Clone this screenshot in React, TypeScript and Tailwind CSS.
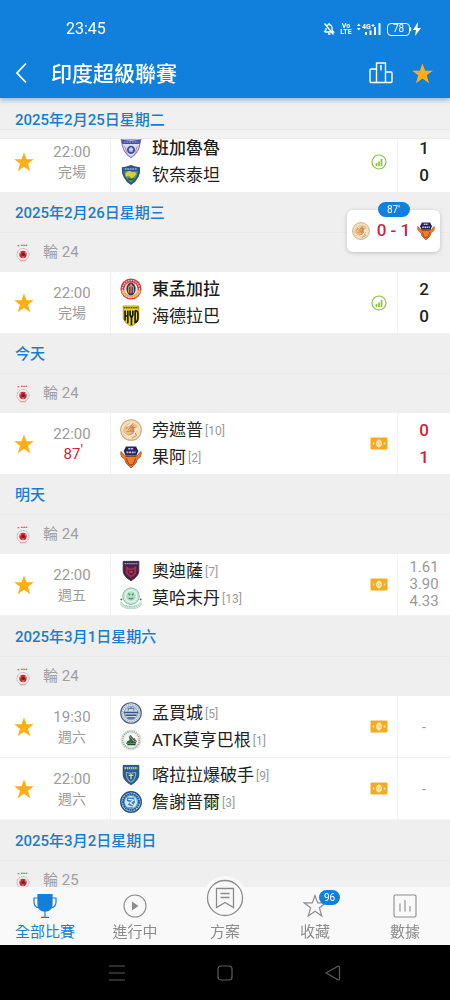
import type { ReactNode } from "react";

type CrestName =
  | "bengaluru" | "chennaiyin" | "eastBengal" | "hyderabad" | "punjab" | "goa"
  | "odisha" | "mohammedan" | "mumbai" | "mohunBagan" | "kerala" | "jamshedpur";

type Team = { name: string; crest: CrestName; rank?: number; winner?: boolean };
type Match = {
  time: string;
  status: string;
  state: "finished" | "live" | "upcoming";
  home: Team;
  away: Team;
  result: string[];
};
type Day = { title: string; round: string; matches: Match[] };

const firstMatch: Match = {
  time: "22:00", status: "完場", state: "finished", result: ["1", "0"],
  home: { name: "班加魯魯", crest: "bengaluru", winner: true },
  away: { name: "钦奈泰坦", crest: "chennaiyin" },
};

const days: Day[] = [
  {
    title: "2025年2月26日星期三", round: "輪 24",
    matches: [{
      time: "22:00", status: "完場", state: "finished", result: ["2", "0"],
      home: { name: "東孟加拉", crest: "eastBengal", winner: true },
      away: { name: "海德拉巴", crest: "hyderabad" },
    }],
  },
  {
    title: "今天", round: "輪 24",
    matches: [{
      time: "22:00", status: "87", state: "live", result: ["0", "1"],
      home: { name: "旁遮普", crest: "punjab", rank: 10 },
      away: { name: "果阿", crest: "goa", rank: 2 },
    }],
  },
  {
    title: "明天", round: "輪 24",
    matches: [{
      time: "22:00", status: "週五", state: "upcoming", result: ["1.61", "3.90", "4.33"],
      home: { name: "奧迪薩", crest: "odisha", rank: 7 },
      away: { name: "莫哈末丹", crest: "mohammedan", rank: 13 },
    }],
  },
  {
    title: "2025年3月1日星期六", round: "輪 24",
    matches: [
      {
        time: "19:30", status: "週六", state: "upcoming", result: ["-"],
        home: { name: "孟買城", crest: "mumbai", rank: 5 },
        away: { name: "ATK莫亨巴根", crest: "mohunBagan", rank: 1 },
      },
      {
        time: "22:00", status: "週六", state: "upcoming", result: ["-"],
        home: { name: "喀拉拉爆破手", crest: "kerala", rank: 9 },
        away: { name: "詹謝普爾", crest: "jamshedpur", rank: 3 },
      },
    ],
  },
  { title: "2025年3月2日星期日", round: "輪 25", matches: [] },
];

const SHIELD = "M3.5 1.5h17v10c0 5-4 8.500-8.500 11-4.500-2.500-8.500-6-8.500-11z";

const crests: Record<CrestName, ReactNode> = {
  bengaluru: (
    <>
      <path d="M1 1q11 3 22 0l-2 10q-2 7-9 11.500Q5 18 3 11z" fill="#d9dcef" stroke="#7a80c0" strokeWidth="1.200" />
      <path d="M1.500 2.500q10.500 3 21 0l-1 5h-19z" fill="#4650a6" />
      <path d="M4 5.500h16" stroke="#aeb4e4" strokeWidth="1" strokeDasharray="2 1" />
      <circle cx="12" cy="14" r="4.500" fill="#4451aa" />
      <path d="m12 11 2.500 2-1 3h-3l-1-3z" fill="#c9cdea" />
      <path d="M5 10l3 8M19 10l-3 8" stroke="#c97a86" strokeWidth="1" />
    </>
  ),
  chennaiyin: (
    <>
      <path d="M12 1q5 2 10 2.500Q23 16 12 23 1 16 2 3.500 7 3 12 1z" fill="#2a5784" />
      <path d="M4.500 8h15q-1 8-7.500 12.500Q5.500 16 4.500 8z" fill="#5f9a4a" />
      <path d="M6 10q4-4 7-1 4-1 5 2l-2 2-3 3-3-3-4 1z" fill="#d8cf3b" />
      <path d="M5 5.500h14" stroke="#9fb6ca" strokeWidth="1.500" strokeDasharray="2 .8" />
      <path d="M9 16q3 2 6 0" stroke="#234d55" strokeWidth="1.500" fill="none" />
    </>
  ),
  eastBengal: (
    <>
      <circle cx="12" cy="12" r="11.500" fill="#cf3a3f" />
      <path d="M1 14a11.500 11.500 0 0 0 22 0l-4-1a8 8 0 0 1-14 0z" fill="#e9a431" />
      <circle cx="12" cy="12" r="9.300" fill="none" stroke="#f7d6cf" strokeWidth="1.400" strokeDasharray="1.500 1.200" />
      <circle cx="12" cy="12" r="7.300" fill="#efe3e5" />
      <ellipse cx="12" cy="12" rx="5" ry="7" fill="#353064" />
      <path d="M9.500 16V10l2.500-3 2.500 3v6M12 8v9" stroke="#e09a54" strokeWidth="1.300" fill="none" />
    </>
  ),
  hyderabad: (
    <>
      <path d="M3.500 1h17v13.500q-2 6-8.500 8.500-6.500-2.500-8.500-8.500z" fill="#f0dc2b" stroke="#8d8226" strokeWidth=".8" />
      <path d="M4 3h16" stroke="#5b5420" strokeWidth="1.400" strokeDasharray="2 .5" />
      <path d="M5.500 6v11M8.500 6v14M5.500 12h3M11 6v5l1.500 3L14 11V6M12.500 14v8M16.500 6v13q3-1 3-4V9q0-3-3-3" stroke="#1f1d10" strokeWidth="1.900" fill="none" />
    </>
  ),
  punjab: (
    <>
      <circle cx="12" cy="12" r="11.300" fill="#f2dfc2" stroke="#d0a873" strokeWidth="1.100" />
      <path d="M3 13q2-8 9-9 6 0 8 5l-4-1-1 6 3 2q-5 6-12 2z" fill="#ecc08a" />
      <path d="M4 17q5 2 10-1l-2-3-5 1M6 11l6-7M9 12l5-7M14 7v7h4M12 9h6M16 14l2 4-5 3" stroke="#c08a52" strokeWidth="1" fill="none" />
      <path d="M4 16l6 3 5-2 4-7M8 8l5-4" stroke="#fff5e5" strokeWidth="1.300" fill="none" />
      <path d="M11 9h4v4h-4M11 11h3" stroke="#d8743f" strokeWidth="1" fill="none" />
    </>
  ),
  goa: (
    <>
      <path d="M1 6q-1 6 4 8l1.500 4.500L12 24l5.500-5.500L19 14q5-2 4-8l-4 4H5z" fill="#ef7e2c" stroke="#8d4316" strokeWidth=".8" />
      <path d="M6.500.500h11l2.500 5-2 4.500H6L4 5.500z" fill="#24245f" />
      <path d="M9 3h6M7 7h10" stroke="#c4c7e4" strokeWidth="1.800" strokeDasharray="2.200 .7" />
      <path d="M6 11.500h12M7 13.500l2.500 6.500M17 13.500 14.500 20" stroke="#8f4117" strokeWidth="1.100" />
      <path d="M10 20.500h4" stroke="#8f3f14" strokeWidth="1.200" fill="none" />
    </>
  ),
  odisha: (
    <>
      <path d={SHIELD} fill="#3d2550" stroke="#33224a" strokeWidth="1" />
      <path d="M5 7h14v5q-1 5-7 9-6-4-7-9z" fill="#65203f" />
      <path d="M5 4h14" stroke="#a8a2bd" strokeWidth="1.500" strokeDasharray="1.500 .6" />
      <path d="M7.500 8l2 2h5l2-2v7L12 18l-4.500-3z" fill="none" stroke="#b03350" strokeWidth="1.400" />
      <path d="M10 13h4" stroke="#d24a62" strokeWidth="1.300" />
    </>
  ),
  mohammedan: (
    <>
      <circle cx="12" cy="10" r="9" fill="#c9eadb" stroke="#7fb29b" strokeWidth="1" />
      <circle cx="12" cy="10" r="6" fill="#b2dcc9" stroke="#e6f7ef" strokeWidth="1.200" />
      <path d="M9 7l2 2M15 7l-2 2M9.500 12q2.500 2 5 0" stroke="#4a8a6e" strokeWidth="1.200" fill="none" />
      <path d="M1 16q3 5 11 5t11-5v4q-4 4-11 4T1 20z" fill="#d9f0e5" stroke="#a3cbb8" strokeWidth=".8" />
      <path d="M4 20q8 4 16 0" stroke="#7bab94" strokeWidth="1" strokeDasharray="1 1" fill="none" />
      <circle cx="1.500" cy="13.500" r="1" fill="#39634f" />
      <circle cx="22.500" cy="13.500" r="1" fill="#39634f" />
    </>
  ),
  mumbai: (
    <>
      <circle cx="12" cy="12" r="11.200" fill="#e1e8ef" stroke="#4b6280" strokeWidth="1.300" />
      <circle cx="12" cy="12" r="9.300" fill="none" stroke="#9badc2" strokeWidth="1.300" strokeDasharray="1.500 1" />
      <circle cx="12" cy="12" r="7.500" fill="#c9d8e7" stroke="#6c84a0" strokeWidth=".8" />
      <path d="M4 11.500h16M6 14.500h12M8 17.500h8" stroke="#38577c" strokeWidth="1.500" fill="none" />
      <path d="M9 9.500V7h6v2.500M12 7V5" stroke="#5f7da0" strokeWidth="1.200" fill="none" />
    </>
  ),
  mohunBagan: (
    <>
      <circle cx="12" cy="12" r="11" fill="#edf2ed" stroke="#d3dad4" strokeWidth=".8" />
      <circle cx="12" cy="12" r="9.200" fill="none" stroke="#98a59b" strokeWidth="2" strokeDasharray="1.200 1.100" />
      <circle cx="12" cy="12" r="6.800" fill="#f6f9f4" />
      <path d="M6.500 16q1-3 4-4l-1-5 3 3 2 3 3 1v2z" fill="#2f6848" />
      <path d="M11 7l5 6M8 17h9" stroke="#33453b" strokeWidth="1.200" />
      <path d="M15 10l3 4" stroke="#a44c4a" strokeWidth="1.200" />
    </>
  ),
  kerala: (
    <>
      <path d={SHIELD} fill="#2a5a97" stroke="#1f4470" strokeWidth="1" />
      <path d="M5 4.500h14" stroke="#c7d64d" strokeWidth="2.200" strokeDasharray="1.600 .7" />
      <path d="M7 9q5 2 10 0M7 9q-1 7 5 11M17 9q1 7-5 11" stroke="#86b3b0" strokeWidth="1.200" fill="none" />
      <path d="M9.500 12.500h5M12 10.500v6" stroke="#dce66d" strokeWidth="1.400" />
    </>
  ),
  jamshedpur: (
    <>
      <circle cx="12" cy="12" r="11.200" fill="#dbe9f4" stroke="#1f4f88" strokeWidth="1.500" />
      <circle cx="12" cy="12" r="8.700" fill="#75afd8" stroke="#235d9d" strokeWidth="2.400" strokeDasharray="2 .6" />
      <circle cx="12" cy="12" r="6.500" fill="#d5eaf6" />
      <path d="M7.500 7h8l1 5-3 5-5-2 2-3-3-1z" fill="#3888c6" />
      <path d="M9 9l6 1-4 3 3 2" stroke="#f3faff" strokeWidth="1.200" fill="none" />
      <path d="M9 18h5" stroke="#d37c53" strokeWidth="1.200" />
    </>
  ),
};

function Crest({ name, className = "size-[22px]" }: { name: CrestName; className?: string }) {
  return <svg viewBox="0 0 24 24" className={`${className} shrink-0`} aria-hidden="true">{crests[name]}</svg>;
}

function Star({ className }: { className: string }) {
  return (
    <svg viewBox="0 0 24 24" className={className} fill="#ffae15" aria-hidden="true">
      <path d="M12 .500l3 8.300h8.800l-7 5.200 2.700 9L12 17.700 4.500 23l2.700-9-7-5.200H9z" />
    </svg>
  );
}

function LeagueLogo() {
  return (
    <svg viewBox="0 0 16 18" className="h-[18px] w-4" aria-hidden="true">
      <path d="M2.500 1.800h2M6 1.300h6.500" stroke="#dc4048" strokeWidth="1.100" strokeDasharray="1.800 .4" />
      <circle cx="8" cy="10.500" r="6" fill="#f7efee" stroke="#bdb5b7" strokeWidth="1" strokeDasharray="2 .5" />
      <circle cx="8" cy="10.500" r="3.700" fill="#cf2a35" />
      <path d="m6.500 9.500 2-1 1.500 1.500-.5 2H7z" fill="#7c2028" />
      <path d="M4.500 8.500l1.500.5M11.500 8.500 10 9M8 13.800V12.500" stroke="#f4d5d5" strokeWidth=".9" />
      <path d="M5 16.800h6" stroke="#dc9c9f" strokeWidth="1" />
    </svg>
  );
}

function StatsMark() {
  return (
    <svg viewBox="0 0 16 16" className="size-4" fill="none" stroke="#8bc53f" aria-label="數據">
      <circle cx="8" cy="8" r="7" strokeWidth="1.200" />
      <path d="M5.500 9V12M8 7.500V12M10.500 5V12" strokeWidth="1.700" />
    </svg>
  );
}

function OddsMark() {
  return (
    <svg viewBox="0 0 18 13" className="h-[13px] w-[18px]" fill="none" aria-label="賠率">
      <rect x=".5" y=".5" width="17" height="12" rx="1" fill="#f5ab21" />
      <ellipse cx="9" cy="6.500" rx="2.200" ry="2.800" stroke="#fff1cc" strokeWidth="1.300" />
      <path d="M9 2.500v8M3.500 5.500v2M14.500 5.500v2" stroke="#fff1cc" strokeWidth="1.300" />
    </svg>
  );
}

function TeamLine({ team }: { team: Team }) {
  return (
    <div className="flex h-[27px] items-center whitespace-nowrap">
      <Crest name={team.crest} />
      <span className={team.winner ? "ml-2.5 pt-0.5 text-[17px] font-medium text-[#1c1c1c]" : "ml-2.5 pt-0.5 text-[17px] text-[#222]"}>
        {team.name}
      </span>
      {team.rank !== undefined && <span className="ml-0.5 pt-0.5 text-xs text-[#9a9a9a]">[{team.rank}]</span>}
    </div>
  );
}

function Result({ match }: { match: Match }) {
  const lines = match.result;
  const style =
    lines.length === 3
      ? "text-[15px] leading-[17px] text-[#999]"
      : lines.length === 1
        ? "text-sm text-[#999]"
        : match.state === "live"
          ? "text-[17px] leading-[27px] font-medium text-[#d0223b]"
          : "text-[17px] leading-[27px] font-medium text-[#222]";
  return (
    <div className={`flex w-[53px] flex-col items-center justify-center border-l border-[#f4f4f4] ${style}`}>
      {lines.map((line, i) => <span key={i}>{line}</span>)}
    </div>
  );
}

function MatchRow({ match }: { match: Match }) {
  return (
    <article
      className={
        match.state === "upcoming"
          ? "flex h-[62px] items-stretch border-b border-[#f2f2f2] bg-white"
          : "flex h-[61px] items-stretch bg-white"
      }
    >
      <button type="button" aria-label="收藏比賽" className="flex w-12 items-center justify-center">
        <Star className="size-5" />
      </button>
      <div className="flex w-12 flex-col items-center justify-center text-[#9b9b9b]">
        <span className="text-[15px] leading-5">{match.time}</span>
        {match.state === "live" ? (
          <span className="relative text-[15px] leading-5 text-[#c9283c]">
            {match.status}
            <span className="absolute -top-1 left-full">'</span>
          </span>
        ) : (
          <span className="text-sm leading-5">{match.status}</span>
        )}
      </div>
      <div className="ml-3.5 flex min-w-0 flex-1 flex-col justify-center border-l border-[#f0f0f0] pl-[9px]">
        <TeamLine team={match.home} />
        <TeamLine team={match.away} />
      </div>
      <div className="flex w-9 items-center justify-center">
        {match.state === "finished" ? <StatsMark /> : <OddsMark />}
      </div>
      <Result match={match} />
    </article>
  );
}

function DaySection({ day }: { day: Day }) {
  return (
    <section>
      <h2 className="flex h-[41px] items-center border-b border-[#e9e9e9] px-[15px] pt-0.5 text-[15px] font-medium text-[#1b7cc9]">
        {day.title}
      </h2>
      <div className="flex h-[39px] items-center gap-3 px-[15px] text-[15px] text-[#a0a0a0]">
        <LeagueLogo />
        <span>{day.round}</span>
      </div>
      {day.matches.map((match) => <MatchRow key={match.home.name} match={match} />)}
    </section>
  );
}

function StatusBar() {
  return (
    <div className="flex h-12 items-center justify-between pt-[10px] pr-7 pl-[66px]">
      <span className="text-base">23:45</span>
      <div className="flex items-center">
        <svg viewBox="0 0 12 14" className="h-[14px] w-3" fill="none" stroke="white" strokeWidth="1.300" aria-hidden="true">
          <path d="M2 10h8.500L9 8V5.500A3 3 0 0 0 4 3.500M3 6v2L1 10M5 12h2.500M1.500 1.500l9 11M6 1v1" />
        </svg>
        <span className="ml-1.5 flex w-2.5 flex-col items-center text-[7px] leading-[6px] font-bold">
          <span>Vo</span><span>LTE</span>
        </span>
        <svg viewBox="0 0 24 14" className="ml-1.5 h-[14px] w-6" fill="white" aria-hidden="true">
          <path d="M0 4l1.800-2.500L3.600 4zM0 6h3.600L1.800 8.500zM8 10h2v3H8zM12.500 8.500h2V13h-2zM17 5h2v8h-2zM21.500 1h2v12h-2z" />
          <text x="5" y="7" fontSize="7" fontWeight="700" fontFamily="Roboto, sans-serif">4G</text>
          <path d="M15.500 2h1v1h1v1h-1v1h-1V4h-1V3h1z" />
        </svg>
        <span className="ml-1.5 flex h-[13px] w-[23px] items-center justify-center rounded border border-white text-[10px] leading-none">78</span>
        <svg viewBox="0 0 12 14" className="h-[14px] w-3" fill="white" aria-hidden="true">
          <path d="M0 5h1.200v4H0zM8 0 3 8h3l-1 6 6-8H7.500z" />
        </svg>
      </div>
    </div>
  );
}

function LiveCard() {
  return (
    <aside className="absolute top-[210px] right-2.5 z-20 flex h-[42px] w-[93px] items-center justify-between rounded-md bg-white px-[5px] shadow-[0_1px_4px_rgba(0,0,0,0.2)]">
      <span className="absolute -top-2 left-1/2 flex h-[15px] w-8 -translate-x-1/2 items-center justify-center rounded-full bg-[#1080dc] text-[10px] text-white">
        87'
      </span>
      <Crest name="punjab" className="size-[18px]" />
      <span className="text-[17px] font-medium whitespace-nowrap text-[#d0223b]">0 - 1</span>
      <Crest name="goa" className="size-[18px]" />
    </aside>
  );
}

function TabLink({ label, active, children }: { label: string; active?: boolean; children: ReactNode }) {
  return (
    <a
      href="#"
      aria-current={active ? "page" : undefined}
      className={
        active
          ? "flex flex-1 flex-col items-center justify-end pb-[3px] text-[#147fd6]"
          : "flex flex-1 flex-col items-center justify-end pb-[3px] text-[#8c8c8c]"
      }
    >
      {children}
      <span className="text-[15px] leading-5 whitespace-nowrap">{label}</span>
    </a>
  );
}

function TabBar() {
  return (
    <nav className="relative z-10 flex h-[58px] shrink-0 bg-[#f9f9f9]">
      <TabLink label="全部比賽" active>
        <svg viewBox="0 0 24 24" className="mb-1 size-6" fill="none" stroke="currentColor" strokeWidth="1.200" aria-hidden="true">
          <path d="M5 .500h14v10q0 5-5 6.500h-4q-5-1.500-5-6.500z" fill="currentColor" />
          <path d="M5 4H1v4q0 5 5 6M19 4h4v4q0 5-5 6M12 17v6M8 23.300h8" />
        </svg>
      </TabLink>
      <TabLink label="進行中">
        <svg viewBox="0 0 24 24" className="mb-1 size-6" fill="none" stroke="currentColor" strokeWidth="1.100" aria-hidden="true">
          <circle cx="12" cy="12" r="11" />
          <path d="m9.500 8.500 5 3.500-5 3.500z" fill="currentColor" />
        </svg>
      </TabLink>
      <TabLink label="方案">
        <span className="mb-0.5 -mt-6 flex size-11 items-center justify-center rounded-full bg-[#f9f9f9]">
          <svg viewBox="0 0 38 38" className="size-[38px]" fill="none" stroke="currentColor" strokeWidth="1.300" aria-hidden="true">
            <circle cx="19" cy="19" r="17.500" />
            <path d="M10.500 9.500h17v19l-8.500-5-8.500 5zM14.500 14.500h9M14.500 18.500h9" />
          </svg>
        </span>
      </TabLink>
      <TabLink label="收藏">
        <span className="relative mb-1">
          <svg viewBox="0 0 24 24" className="size-6" fill="none" stroke="currentColor" strokeWidth="1.200" aria-hidden="true">
            <path d="M12 1.500l2.700 7.400h8l-6.300 4.900 2.400 8.200L12 17.300 5.200 22l2.400-8.200-6.300-4.900h8z" />
          </svg>
          <span className="absolute -top-1 left-4 flex h-[15px] w-[21px] items-center justify-center rounded-full bg-[#147fd6] text-[10px] text-white">96</span>
        </span>
      </TabLink>
      <TabLink label="數據">
        <svg viewBox="0 0 24 24" className="mb-1 size-6" fill="none" stroke="currentColor" strokeWidth="1.100" aria-hidden="true">
          <rect x="1" y="1" width="22" height="22" rx="1.500" />
          <path d="M7 9.500v8M12 6v11.500M17 12v5.500" />
        </svg>
      </TabLink>
    </nav>
  );
}

function SystemBar() {
  return (
    <div className="flex h-[55px] shrink-0 items-center justify-center gap-[90px] bg-black text-[#5c5c5c]">
      <button type="button" aria-label="選單">
        <svg viewBox="0 0 18 18" className="size-[18px]" stroke="currentColor" strokeWidth="1.200"><path d="M1 2h16M1 9h16M1 16h16" /></svg>
      </button>
      <button type="button" aria-label="主畫面">
        <svg viewBox="0 0 18 18" className="size-[18px]" fill="none" stroke="currentColor" strokeWidth="1.200"><rect x="2" y="2" width="14" height="14" rx="3" /></svg>
      </button>
      <button type="button" aria-label="返回">
        <svg viewBox="0 0 18 18" className="size-[18px]" fill="none" stroke="currentColor" strokeWidth="1.200" strokeLinejoin="round"><path d="M2 9 14 2.300q1.500-.5 1.500 1v11.400q0 1.500-1.500 1z" /></svg>
      </button>
    </div>
  );
}

export default function App() {
  return (
    <div className="relative flex h-screen flex-col overflow-hidden bg-[#efefef] font-['Roboto','Noto_Sans_CJK_TC','Noto_Sans_CJK_SC',sans-serif]">
      <header className="relative z-20 shrink-0 bg-[#1080dc] text-white shadow-[0_2px_5px_rgba(16,128,220,0.5)]">
        <StatusBar />
        <div className="flex h-[50px] items-center pr-[17px] pl-[13px]">
          <button type="button" aria-label="返回" className="flex w-4 justify-center">
            <svg viewBox="0 0 14 22" className="h-[22px] w-3.5" fill="none" stroke="currentColor" strokeWidth="1.800"><path d="M12 1.500 3 11l9 9.500" /></svg>
          </button>
          <h1 className="ml-[22px] flex-1 pt-0.5 text-[21px] leading-7 font-medium">印度超級聯賽</h1>
          <button type="button" aria-label="排名">
            <svg viewBox="0 0 24 22" className="h-[22px] w-6" fill="none" stroke="currentColor" strokeWidth="1.400" aria-hidden="true">
              <path d="M7.500 20.500V1h9v19.500M7.500 7H2q-1 0-1 1v11.500q0 1 1 1h20q1 0 1-1V11q0-1-1-1h-5.500M11 4.500l1-.5v4.500" />
            </svg>
          </button>
          <button type="button" aria-label="收藏聯賽" className="ml-[19px]">
            <Star className="size-[21px]" />
          </button>
        </div>
      </header>

      <main className="min-h-0 flex-1 overflow-y-auto [scrollbar-width:none]">
        <div className="sticky top-0 z-10 bg-[#f0f0f0]">
          <h2 className="h-8 border-b border-[#e6e6e6] px-[15px] pt-3 text-[15px] leading-5 font-medium text-[#1b7cc9]">
            2025年2月25日星期二
          </h2>
          <div className="h-[9px] border-b border-[#ececec] bg-[#f2f2f2]" />
        </div>
        <div className="-mt-2">
          <MatchRow match={firstMatch} />
        </div>
        {days.map((day) => <DaySection key={day.title} day={day} />)}
      </main>

      <LiveCard />
      <TabBar />
      <SystemBar />
    </div>
  );
}
